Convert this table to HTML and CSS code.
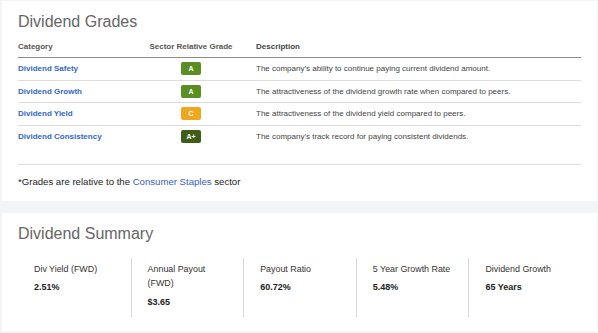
FILE: index.html
```html
<!DOCTYPE html>
<html>
<head>
<meta charset="utf-8">
<link rel="stylesheet" href="styles.css">
</head>
<body>
<div class="page">
  <section class="card grades">
    <h2 class="card-title">Dividend Grades</h2>
    <div class="grade-table">
      <div class="row head">
        <div class="c-cat">Category</div>
        <div class="c-grade">Sector Relative Grade</div>
        <div class="c-desc">Description</div>
      </div>
      <div class="row">
        <div class="c-cat"><a class="cat-link">Dividend Safety</a></div>
        <div class="c-grade"><span class="badge b-a">A</span></div>
        <div class="c-desc">The company's ability to continue paying current dividend amount.</div>
      </div>
      <div class="row">
        <div class="c-cat"><a class="cat-link">Dividend Growth</a></div>
        <div class="c-grade"><span class="badge b-a">A</span></div>
        <div class="c-desc">The attractiveness of the dividend growth rate when compared to peers.</div>
      </div>
      <div class="row">
        <div class="c-cat"><a class="cat-link">Dividend Yield</a></div>
        <div class="c-grade"><span class="badge b-c">C</span></div>
        <div class="c-desc">The attractiveness of the dividend yield compared to peers.</div>
      </div>
      <div class="row last">
        <div class="c-cat"><a class="cat-link">Dividend Consistency</a></div>
        <div class="c-grade"><span class="badge b-ap">A+</span></div>
        <div class="c-desc">The company's track record for paying consistent dividends.</div>
      </div>
    </div>
    <p class="note">*Grades are relative to the <a class="sector-link">Consumer Staples</a> sector</p>
  </section>

  <section class="card summary">
    <h2 class="card-title">Dividend Summary</h2>
    <div class="stats">
      <div class="stat">
        <div class="stat-label">Div Yield (FWD)</div>
        <div class="stat-value">2.51%</div>
      </div>
      <div class="stat">
        <div class="stat-label">Annual Payout (FWD)</div>
        <div class="stat-value">$3.65</div>
      </div>
      <div class="stat">
        <div class="stat-label">Payout Ratio</div>
        <div class="stat-value">60.72%</div>
      </div>
      <div class="stat">
        <div class="stat-label">5 Year Growth Rate</div>
        <div class="stat-value">5.48%</div>
      </div>
      <div class="stat">
        <div class="stat-label">Dividend Growth</div>
        <div class="stat-value">65 Years</div>
      </div>
    </div>
  </section>
</div>
</body>
</html>
```

FILE: styles.css
```css
html, body {
  margin: 0;
  padding: 0;
  background: #f3f4f8;
  font-family: "Liberation Sans", Arial, sans-serif;
  color: #333;
}

.page {
  padding: 1px 1px 0 2px;
  display: flex;
  flex-direction: column;
  gap: 12px;
}

.card {
  background: #fff;
  padding: 11px 16px 0 16px;
}

.card-title {
  margin: 0;
  font-size: 16px;
  line-height: 20px;
  font-weight: normal;
  color: #666;
}

.grades {
  height: 189px;
}

.grade-table {
  margin-top: 9px;
}

.row {
  display: grid;
  grid-template-columns: 108px 130px 1fr;
  align-items: center;
  font-size: 8px;
  padding: 4.25px 0;
  border-bottom: 1px solid #dcdcdc;
}

.row.head {
  padding: 0 0 4px 0;
  line-height: 12px;
  font-weight: bold;
  color: #555;
  border-bottom: 1px solid #8a8a8a;
}

.row.last {
  padding-bottom: 21px;
  border-bottom: 1px solid #dcdcdc;
}

.c-grade {
  text-align: center;
}

.c-desc {
  color: #444;
}

.cat-link {
  color: #3268c8;
  font-weight: bold;
  text-decoration: none;
}

.badge {
  display: inline-block;
  width: 20px;
  height: 13px;
  line-height: 13px;
  border-radius: 2px;
  color: #fff;
  font-size: 7px;
  font-weight: bold;
  text-align: center;
  vertical-align: middle;
}

.b-a { background: #5b8e22; }
.b-c { background: #efa71d; }
.b-ap { background: #3e5e17; }

.note {
  margin: 11px 0 0 0;
  font-size: 9.6px;
  line-height: 12px;
  color: #222;
}

.sector-link {
  color: #3a5cc8;
  text-decoration: none;
}

.summary {
  height: 107px;
}

.stats {
  margin-top: 14px;
  display: grid;
  grid-template-columns: repeat(5, 1fr);
}

.stat {
  padding: 3.75px 11.5px 8px 16px;
  height: 47px;
}

.stat + .stat {
  border-left: 1px solid #d8d8d8;
}

.stat-label {
  font-size: 8.9px;
  line-height: 14.5px;
  color: #333;
}

.stat-value {
  margin-top: 4px;
  font-size: 9px;
  line-height: 14px;
  font-weight: bold;
  color: #222;
}
```
